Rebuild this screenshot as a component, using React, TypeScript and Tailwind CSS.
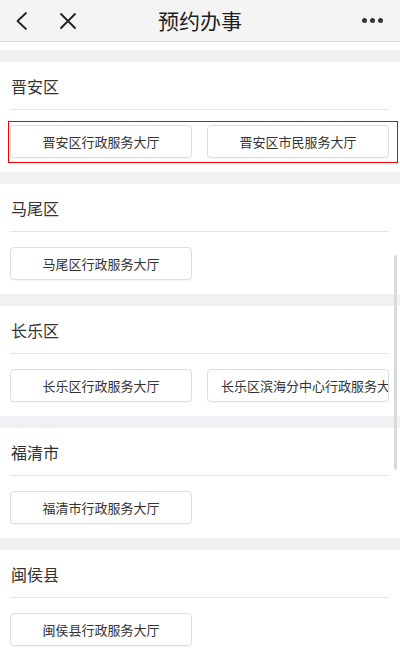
import React from 'react';

type Area = {
  name: string;
  halls: string[];
  marked?: boolean;
};

const AREAS: Area[] = [
  { name: '晋安区', halls: ['晋安区行政服务大厅', '晋安区市民服务大厅'], marked: true },
  { name: '马尾区', halls: ['马尾区行政服务大厅'] },
  { name: '长乐区', halls: ['长乐区行政服务大厅', '长乐区滨海分中心行政服务大厅'] },
  { name: '福清市', halls: ['福清市行政服务大厅'] },
  { name: '闽侯县', halls: ['闽侯县行政服务大厅'] },
];

const font = { fontFamily: '"Noto Sans CJK SC", "Noto Sans", sans-serif' };

const Header: React.FC = () => (
  <div className="grid h-[42px] grid-cols-[1fr_auto_1fr] items-center border-b border-[#dadada] bg-[#f4f4f4] px-[14px]">
    <div className="flex items-center">
      <svg width="16" height="20" viewBox="0 0 16 20" className="mr-[29px]">
        <path d="M12 2 L3.5 10 L12 18" fill="none" stroke="#222" strokeWidth="1.8" strokeLinecap="round" strokeLinejoin="round" />
      </svg>
      <svg width="18" height="18" viewBox="0 0 18 18">
        <path d="M2 2 L16 16 M16 2 L2 16" fill="none" stroke="#222" strokeWidth="1.8" strokeLinecap="round" />
      </svg>
    </div>
    <div className="text-center text-[21px] text-[#1f1f1f]">预约办事</div>
    <div className="flex items-center justify-end gap-[3px] pr-[3px]">
      <span className="h-[5px] w-[5px] rounded-full bg-[#333]" />
      <span className="h-[5px] w-[5px] rounded-full bg-[#333]" />
      <span className="h-[5px] w-[5px] rounded-full bg-[#333]" />
    </div>
  </div>
);

const Section: React.FC<{ area: Area }> = ({ area }) => (
  <div className="bg-white pl-[10px] pr-[11px] pb-[14px]">
    <div className="flex h-[48px] items-center border-b border-[#e4e4e4] pl-[1px] text-[16px] text-[#333]">
      {area.name}
    </div>
    <div className="relative mt-[15px] flex gap-[15px]">
      {area.halls.map((hall) => (
        <div
          key={hall}
          className="h-[33px] w-[182px] overflow-hidden whitespace-nowrap rounded-[4px] border border-[#dedede] bg-white px-[13px] text-center text-[13px] leading-[31px] text-[#333] shadow-[0_1px_1px_rgba(0,0,0,0.04)]"
        >
          {hall}
        </div>
      ))}
      {area.marked && (
        <div className="pointer-events-none absolute -left-[2px] -right-[9px] -top-[4px] -bottom-[5px] border border-[#f20000]" />
      )}
    </div>
  </div>
);

const App: React.FC = () => {
  return (
    <div className="relative h-[660px] w-[400px] overflow-hidden bg-[#f1f1f3]" style={font}>
      <Header />
      <div className="h-[8px] bg-white" />
      <div className="mt-[12px] flex flex-col gap-[12px]">
        {AREAS.map((area) => (
          <Section key={area.name} area={area} />
        ))}
      </div>
      {/* scrollbar */}
      <div className="absolute right-[3px] top-[255px] h-[215px] w-[3px] rounded-full bg-[#d9d9d9]" />
    </div>
  );
};

export default App;
